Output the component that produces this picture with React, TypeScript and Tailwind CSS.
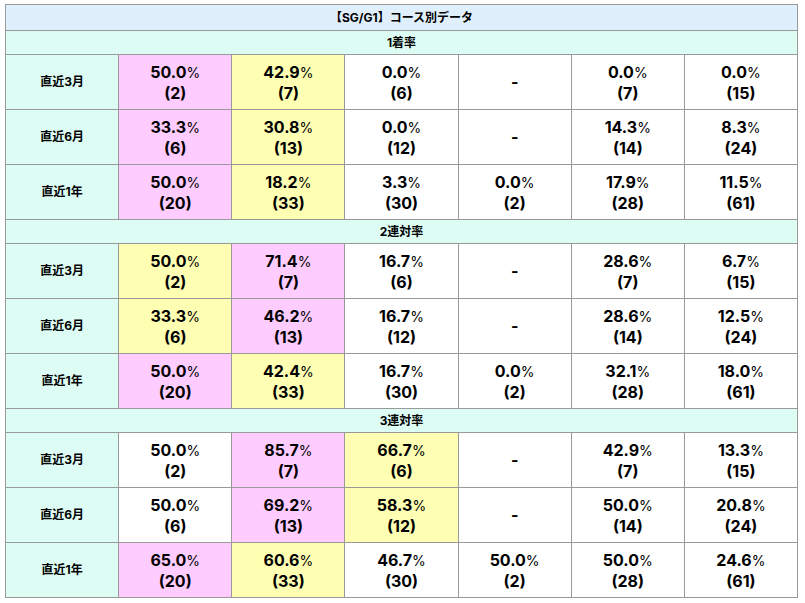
import React from "react";

type Cell = { v: string; n?: string; c?: "p" | "y" };

const sections: { title: string; rows: { label: string; cells: Cell[] }[] }[] = [
  {
    title: "1着率",
    rows: [
      { label: "直近3月", cells: [{ v: "50.0", n: "2", c: "p" }, { v: "42.9", n: "7", c: "y" }, { v: "0.0", n: "6" }, { v: "-" }, { v: "0.0", n: "7" }, { v: "0.0", n: "15" }] },
      { label: "直近6月", cells: [{ v: "33.3", n: "6", c: "p" }, { v: "30.8", n: "13", c: "y" }, { v: "0.0", n: "12" }, { v: "-" }, { v: "14.3", n: "14" }, { v: "8.3", n: "24" }] },
      { label: "直近1年", cells: [{ v: "50.0", n: "20", c: "p" }, { v: "18.2", n: "33", c: "y" }, { v: "3.3", n: "30" }, { v: "0.0", n: "2" }, { v: "17.9", n: "28" }, { v: "11.5", n: "61" }] },
    ],
  },
  {
    title: "2連対率",
    rows: [
      { label: "直近3月", cells: [{ v: "50.0", n: "2", c: "y" }, { v: "71.4", n: "7", c: "p" }, { v: "16.7", n: "6" }, { v: "-" }, { v: "28.6", n: "7" }, { v: "6.7", n: "15" }] },
      { label: "直近6月", cells: [{ v: "33.3", n: "6", c: "y" }, { v: "46.2", n: "13", c: "p" }, { v: "16.7", n: "12" }, { v: "-" }, { v: "28.6", n: "14" }, { v: "12.5", n: "24" }] },
      { label: "直近1年", cells: [{ v: "50.0", n: "20", c: "p" }, { v: "42.4", n: "33", c: "y" }, { v: "16.7", n: "30" }, { v: "0.0", n: "2" }, { v: "32.1", n: "28" }, { v: "18.0", n: "61" }] },
    ],
  },
  {
    title: "3連対率",
    rows: [
      { label: "直近3月", cells: [{ v: "50.0", n: "2" }, { v: "85.7", n: "7", c: "p" }, { v: "66.7", n: "6", c: "y" }, { v: "-" }, { v: "42.9", n: "7" }, { v: "13.3", n: "15" }] },
      { label: "直近6月", cells: [{ v: "50.0", n: "6" }, { v: "69.2", n: "13", c: "p" }, { v: "58.3", n: "12", c: "y" }, { v: "-" }, { v: "50.0", n: "14" }, { v: "20.8", n: "24" }] },
      { label: "直近1年", cells: [{ v: "65.0", n: "20", c: "p" }, { v: "60.6", n: "33", c: "y" }, { v: "46.7", n: "30" }, { v: "50.0", n: "2" }, { v: "50.0", n: "28" }, { v: "24.6", n: "61" }] },
    ],
  },
];

const bg = { p: "bg-[#ffccff]", y: "bg-[#ffffb3]" };

const App: React.FC = () => {
  return (
    <div className="bg-white min-h-screen pl-[5px] pt-[4px] text-black font-['Inter','Noto_Sans_CJK_JP',sans-serif]">
      <table className="w-[793px] table-fixed border-collapse border border-[#999999]">
        <tbody>
          <tr>
            <th colSpan={7} className="h-[26px] p-0 border border-[#999999] bg-[#dfeffb] text-[12px] font-bold">
              【SG/G1】コース別データ
            </th>
          </tr>
          {sections.map((sec) => (
            <React.Fragment key={sec.title}>
              <tr>
                <th colSpan={7} className="h-[24px] p-0 border border-[#999999] bg-[#ddfdf4] text-[12px] font-bold">
                  {sec.title}
                </th>
              </tr>
              {sec.rows.map((row) => (
                <tr key={row.label}>
                  <th className="h-[55px] p-0 border border-[#999999] bg-[#ddfdf4] text-[12px] font-bold">
                    {row.label}
                  </th>
                  {row.cells.map((cell, i) => (
                    <td
                      key={i}
                      className={`p-0 border border-[#999999] text-center font-bold text-[16px] leading-[20px] ${cell.c ? bg[cell.c] : "bg-white"}`}
                    >
                      {cell.n ? (
                        <>
                          <div>
                            {cell.v}
                            <span className="font-normal text-[14px]">%</span>
                          </div>
                          <div>({cell.n})</div>
                        </>
                      ) : (
                        cell.v
                      )}
                    </td>
                  ))}
                </tr>
              ))}
            </React.Fragment>
          ))}
        </tbody>
      </table>
    </div>
  );
};

export default App;
